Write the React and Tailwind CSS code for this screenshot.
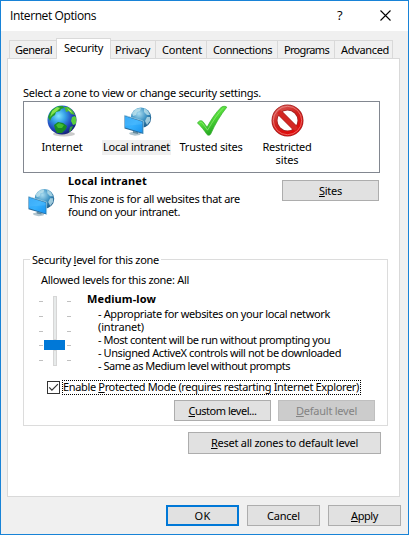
import { useId, useLayoutEffect, useRef, useState } from 'react'

// A single line of text tracked so that its advance equals `w` pixels.
function Line({ w, className = '', children }) {
  const ref = useRef(null)
  const [spacing, setSpacing] = useState(0)
  useLayoutEffect(() => {
    const natural = ref.current.getBoundingClientRect().width
    setSpacing((w - natural) / ref.current.textContent.length)
  }, [w])
  return (
    <span className={`block h-[13px] whitespace-nowrap ${className}`}>
      <span ref={ref} style={{ letterSpacing: `${spacing}px` }}>{children}</span>
    </span>
  )
}

function Key({ children }) {
  return <span className="underline decoration-1 underline-offset-[1px]">{children}</span>
}

function Tab({ label, text, className = '', pad }) {
  return (
    <div className={`h-[18px] border-t border-r border-[#d9d9d9] bg-[#f0f0f0] pt-[3px] ${pad} ${className}`}>
      <Line w={text}>{label}</Line>
    </div>
  )
}

function Button({ className = '', tone = 'border border-[#adadad] bg-[#e1e1e1] pt-1', children }) {
  return (
    <button className={`flex items-start justify-center ${tone} ${className}`}>
      {children}
    </button>
  )
}

function Globe() {
  const id = useId()
  return (
    <svg width="31" height="32" viewBox="0 0 31 32">
      <defs>
        <radialGradient id={id} cx=".38" cy=".36" r=".68">
          <stop offset="0" stopColor="#7fe4ff" />
          <stop offset=".35" stopColor="#36a0e6" />
          <stop offset=".7" stopColor="#2145bd" />
          <stop offset="1" stopColor="#14206f" />
        </radialGradient>
        <clipPath id={`${id}c`}><circle cx="15" cy="15" r="14.3" /></clipPath>
      </defs>
      <ellipse cx="17" cy="29" rx="11" ry="2.5" fill="#b5b5b5" opacity=".7" />
      <circle cx="15" cy="15" r="14.5" fill={`url(#${id})`} />
      <g clipPath={`url(#${id}c)`}>
        <path d="M1 12 4 5 11 1l5 0 1 2-3 1-1 2-4 1-1 3-3 2-2 4Z" fill="#259c2c" />
        <path d="m5 6 5-4 3 1-3 3-4 3-3 3Z" fill="#86e34c" />
        <path d="m17 2 5 0 4 4 2 4-4-1-2-3-3 1-1-3Z" fill="#4abb36" />
        <path d="m20 3 4 3 1 2-3-2Z" fill="#b3ed65" />
        <path d="m7 20 4-3 5 1 4 3-1 3-4 4-5 0-2-4Z" fill="#188b25" />
        <path d="m9 20 3-2 5 2-2 3-4 0Z" fill="#42bd32" />
        <path d="m25 12 3-1 2 3-1 5-3 1-2-4Z" fill="#59cf3d" />
        <path d="m23 22 3-1-2 5-2 1Z" fill="#36a73d" />
      </g>
    </svg>
  )
}

function NetworkPc({ className }) {
  const id = useId()
  return (
    <svg className={className} viewBox="0 0 28 29">
      <defs>
        <radialGradient id={id} cx=".4" cy=".3" r=".75">
          <stop offset="0" stopColor="#a9dcf0" />
          <stop offset=".5" stopColor="#4094c4" />
          <stop offset="1" stopColor="#175583" />
        </radialGradient>
        <linearGradient id={`${id}s`} x1="0" y1="0" x2="1" y2="1">
          <stop offset="0" stopColor="#27a0f5" />
          <stop offset=".5" stopColor="#35b0fd" />
          <stop offset="1" stopColor="#1994ef" />
        </linearGradient>
      </defs>
      <circle cx="17" cy="10.7" r="10.2" fill={`url(#${id})`} />
      <path d="m8 6 4-4 5-1-1 3-3 1-1 3-3 1Zm12-5 4 3 2 4-3 0-3-3Zm3 9 3 0 0 4-3 4-2-4Z" fill="#c4e5ee" opacity=".75" />
      <path d="m5 26 6-2 6 2-1 2-5 .8-5-1.3Z" fill="#b2c5ce" />
      <path d="m9 24 5 1 0 2-5-1Z" fill="#668b9e" />
      <path d="M.5 8.3 19.3 14v13L.5 21.5Z" fill="#256a9c" />
      <path d="M1 9.2 18.4 14.8v11L1 20.5Z" fill={`url(#${id}s)`} />
      <path d="m1 9.2 17.4 5.6v2.5L1 19Z" fill="#75caff" opacity=".25" />
      <path d="m.5 8.3 18.8 5.7v13" fill="none" stroke="#a7d9ee" strokeWidth=".7" />
    </svg>
  )
}

function Check() {
  const id = useId()
  return (
    <svg width="32" height="32" viewBox="0 0 32 32">
      <defs>
        <linearGradient id={id} x1="0" y1="0" x2=".6" y2="1">
          <stop offset="0" stopColor="#65e34d" />
          <stop offset=".5" stopColor="#54dc39" />
          <stop offset="1" stopColor="#199a1b" />
        </linearGradient>
      </defs>
      <path
        d="M.5 18c1-2.2 3.8-3.2 5.3-1.5 1.8 2 2.8 3.8 4.2 5.8C14.2 14.5 18.7 7.5 24.5 2c1.8-1 4.4-.9 5.3.2C23.5 10 18.2 19 13.6 29.3c-.9 1.3-2.8 1.2-3.6.2C7.2 25.2 4.2 21.5.5 18Z"
        fill={`url(#${id})`} stroke="#35ae2d" strokeWidth=".7"
      />
      <path d="M2.5 18c1-1 2-1 3 .2l5 7C16 16 20.5 8.5 26.5 2.8" fill="none" stroke="#a4f48c" strokeWidth=".8" opacity=".7" />
    </svg>
  )
}

function NoEntry() {
  const id = useId()
  return (
    <svg width="33" height="33" viewBox="0 0 33 33">
      <defs>
        <linearGradient id={id} x1="0" y1="0" x2=".6" y2="1">
          <stop offset="0" stopColor="#d9605b" />
          <stop offset=".5" stopColor="#d1201d" />
          <stop offset="1" stopColor="#e00a09" />
        </linearGradient>
      </defs>
      <circle cx="16.5" cy="16.5" r="13" fill="#fff" stroke="#a52323" strokeWidth="6" />
      <path d="m8 8 17 17" stroke="#b52a27" strokeWidth="6" />
      <circle cx="16.5" cy="16.5" r="13" fill="none" stroke={`url(#${id})`} strokeWidth="4.4" />
      <path d="m7.5 7.5 18 18" stroke="#d42623" strokeWidth="4.3" />
      <circle cx="16.5" cy="16.5" r="14.2" fill="none" stroke="#f4aaa5" strokeWidth=".8" opacity=".7" />
    </svg>
  )
}

function Ticks() {
  return (
    <div className="flex flex-col pt-[5px]">
      <i className="mb-[14px] h-px w-1 bg-[#c0c0c0]" />
      <i className="mb-[14px] h-px w-1 bg-[#c0c0c0]" />
      <i className="mb-[13px] h-px w-1 bg-[#c0c0c0]" />
      <i className="mb-[14px] h-px w-1 bg-[#c0c0c0]" />
      <i className="h-px w-1 bg-[#c0c0c0]" />
    </div>
  )
}

export default function App() {
  return (
    <div className="h-[555px] w-[409px] overflow-hidden bg-white font-['Noto_Sans',sans-serif] text-[11px] leading-[11px] text-black">
      <div className="flex h-[535px] flex-col border border-[#1883d7] bg-[#f0f0f0]">
        <header className="flex h-[30px] shrink-0 bg-white pl-[9px]">
          <div className="w-[327px] pt-2 font-['Open_Sans',sans-serif] text-[12px] leading-[13px]">
            <Line w={86}>Internet Options</Line>
          </div>
          <span className="w-[43px] pt-[7px] font-['Open_Sans',sans-serif] text-[13px] leading-[15px] font-medium">?</span>
          <svg className="mt-[9px]" width="11" height="11" viewBox="0 0 11 11">
            <path d="m.5.5 10 10m0-10-10 10" stroke="#000" strokeWidth="1.1" />
          </svg>
        </header>

        <nav className="flex h-[27px] shrink-0 items-end pl-2">
          <Tab label="General" text={37} pad="pl-[5px]" className="w-[47px] border-r-0 border-l" />
          <div className="z-10 -mb-px h-[21px] w-[55px] border border-b-0 border-[#d9d9d9] bg-white pt-[3px] pl-[7px]">
            <Line w={39}>Security</Line>
          </div>
          <Tab label="Privacy" text={35} pad="pl-[4px]" className="w-[45px]" />
          <Tab label="Content" text={40} pad="pl-[6px]" className="w-[51px]" />
          <Tab label="Connections" text={59} pad="pl-[6px]" className="w-[71px]" />
          <Tab label="Programs" text={45} pad="pl-[6px]" className="w-[57px]" />
          <Tab label="Advanced" text={48} pad="pl-[6px]" className="w-[58px]" />
        </nav>

        <main className="ml-[6px] h-[439px] w-[393px] shrink-0 border border-[#d9d9d9] bg-white pt-[28px] pl-[15px]">
          <Line w={238}>Select a zone to view or change security settings.</Line>

          <section className="mt-[1px] flex h-[72px] w-[357px] border border-[#828790] text-center">
            <div className="w-[76px] pt-[3px]">
              <div className="flex h-[36px] pl-[23px]"><Globe /></div>
              <Line w={41}>Internet</Line>
            </div>
            <div className="w-[75px] pt-[5px]">
              <div className="h-[33px] pl-[24px]"><NetworkPc className="h-[29px] w-[28px]" /></div>
              <div className="ml-[2px] h-[15px] w-[69px] bg-[#f0f0f0] pt-px"><Line w={67}>Local intranet</Line></div>
            </div>
            <div className="w-[73px] pt-[3px]">
              <div className="flex h-[36px] pl-[22px]"><Check /></div>
              <Line w={63} className="pr-px">Trusted sites</Line>
            </div>
            <div className="w-[75px] pt-[2px]">
              <div className="flex h-[37px] pl-[23px]"><NoEntry /></div>
              <Line w={49} className="pl-[3px]">Restricted</Line>
              <Line w={23} className="pl-[3px]">sites</Line>
            </div>
          </section>

          <section className="flex h-[86px] pt-[2px]">
            <div className="w-[45px] pt-[13px] pl-[5px]"><NetworkPc className="h-[29px] w-[27px]" /></div>
            <div className="w-[214px]">
              <Line w={79} className="font-bold">Local intranet</Line>
              <div className="pt-[5px]">
                <Line w={172}>This zone is for all websites that are</Line>
                <Line w={112}>found on your intranet.</Line>
              </div>
            </div>
            <Button className="mt-[5px] h-[21px] w-[97px]"><Line w={23}><Key>S</Key>ites</Line></Button>
          </section>

          <fieldset className="h-[167px] w-[365px] border border-[#dcdcdc]">
            <div className="-mt-[6px] ml-[6px] w-[131px] bg-white pl-[2px]">
              <Line w={127}>Security <Key>l</Key>evel for this zone</Line>
            </div>
            <Line w={148} className="mt-[7px] ml-[17px]">Allowed levels for this zone: All</Line>
            <div className="flex h-[92px] pl-[15px]">
              <div className="flex h-[82px] w-[48px] pt-[9px]">
                <Ticks />
                <div className="mx-[1px] flex w-[21px] flex-col items-center">
                  <i className="h-[44px] w-1 border border-[#d6d6d6] bg-[#e7eaea]" />
                  <i className="h-[10px] w-[21px] bg-[#0078d7]" />
                  <i className="h-[16px] w-1 border border-[#d6d6d6] bg-[#e7eaea]" />
                </div>
                <div className="ml-px"><Ticks /></div>
              </div>
              <div className="pt-[6px]">
                <Line w={69} className="font-bold">Medium-low</Line>
                <div className="pt-[2px] pl-[11px]">
                  <Line w={232}>- Appropriate for websites on your local network</Line>
                  <Line w={46}>(intranet)</Line>
                  <Line w={232}>- Most content will be run without prompting you</Line>
                  <Line w={243}>- Unsigned ActiveX controls will not be downloaded</Line>
                  <Line w={192}>- Same as Medium level without prompts</Line>
                </div>
              </div>
            </div>
            <div className="mt-px flex pl-[23px]">
              <div className="mt-px h-[13px] w-[13px] border border-[#333] bg-white">
                <svg width="11" height="11" viewBox="0 0 11 11">
                  <path d="m1.2 5.4 2.7 2.7 6-6" fill="none" stroke="#333" strokeWidth="1.2" />
                </svg>
              </div>
              <div className="ml-[2px] h-[15px] w-[299px] border border-dotted border-black">
                <Line w={296}>Enable <Key>P</Key>rotected Mode (requires restarting Internet Explorer)</Line>
              </div>
            </div>
            <div className="mt-[5px] flex gap-[7px] pl-[150px]">
              <Button className="h-[21px] w-[97px]"><Line w={68}><Key>C</Key>ustom level...</Line></Button>
              <Button tone="border border-[#bfbfbf] bg-[#cccccc] pt-1 text-[#838383]" className="h-[21px] w-[97px]"><Line w={61}><Key>D</Key>efault level</Line></Button>
            </div>
          </fieldset>

          <Button className="mt-[6px] ml-[165px] h-[22px] w-[193px]">
            <Line w={147}><Key>R</Key>eset all zones to default level</Line>
          </Button>
        </main>

        <footer className="flex gap-2 pt-2 pl-[165px]">
          <Button tone="border-2 border-[#0078d7] bg-[#e1e1e1] pt-[3px]" className="h-[21px] w-[73px]"><Line w={16}>OK</Line></Button>
          <Button className="h-[21px] w-[73px]"><Line w={33}>Cancel</Line></Button>
          <Button className="h-[21px] w-[73px]"><Line w={27}><Key>A</Key>pply</Line></Button>
        </footer>
      </div>
    </div>
  )
}
